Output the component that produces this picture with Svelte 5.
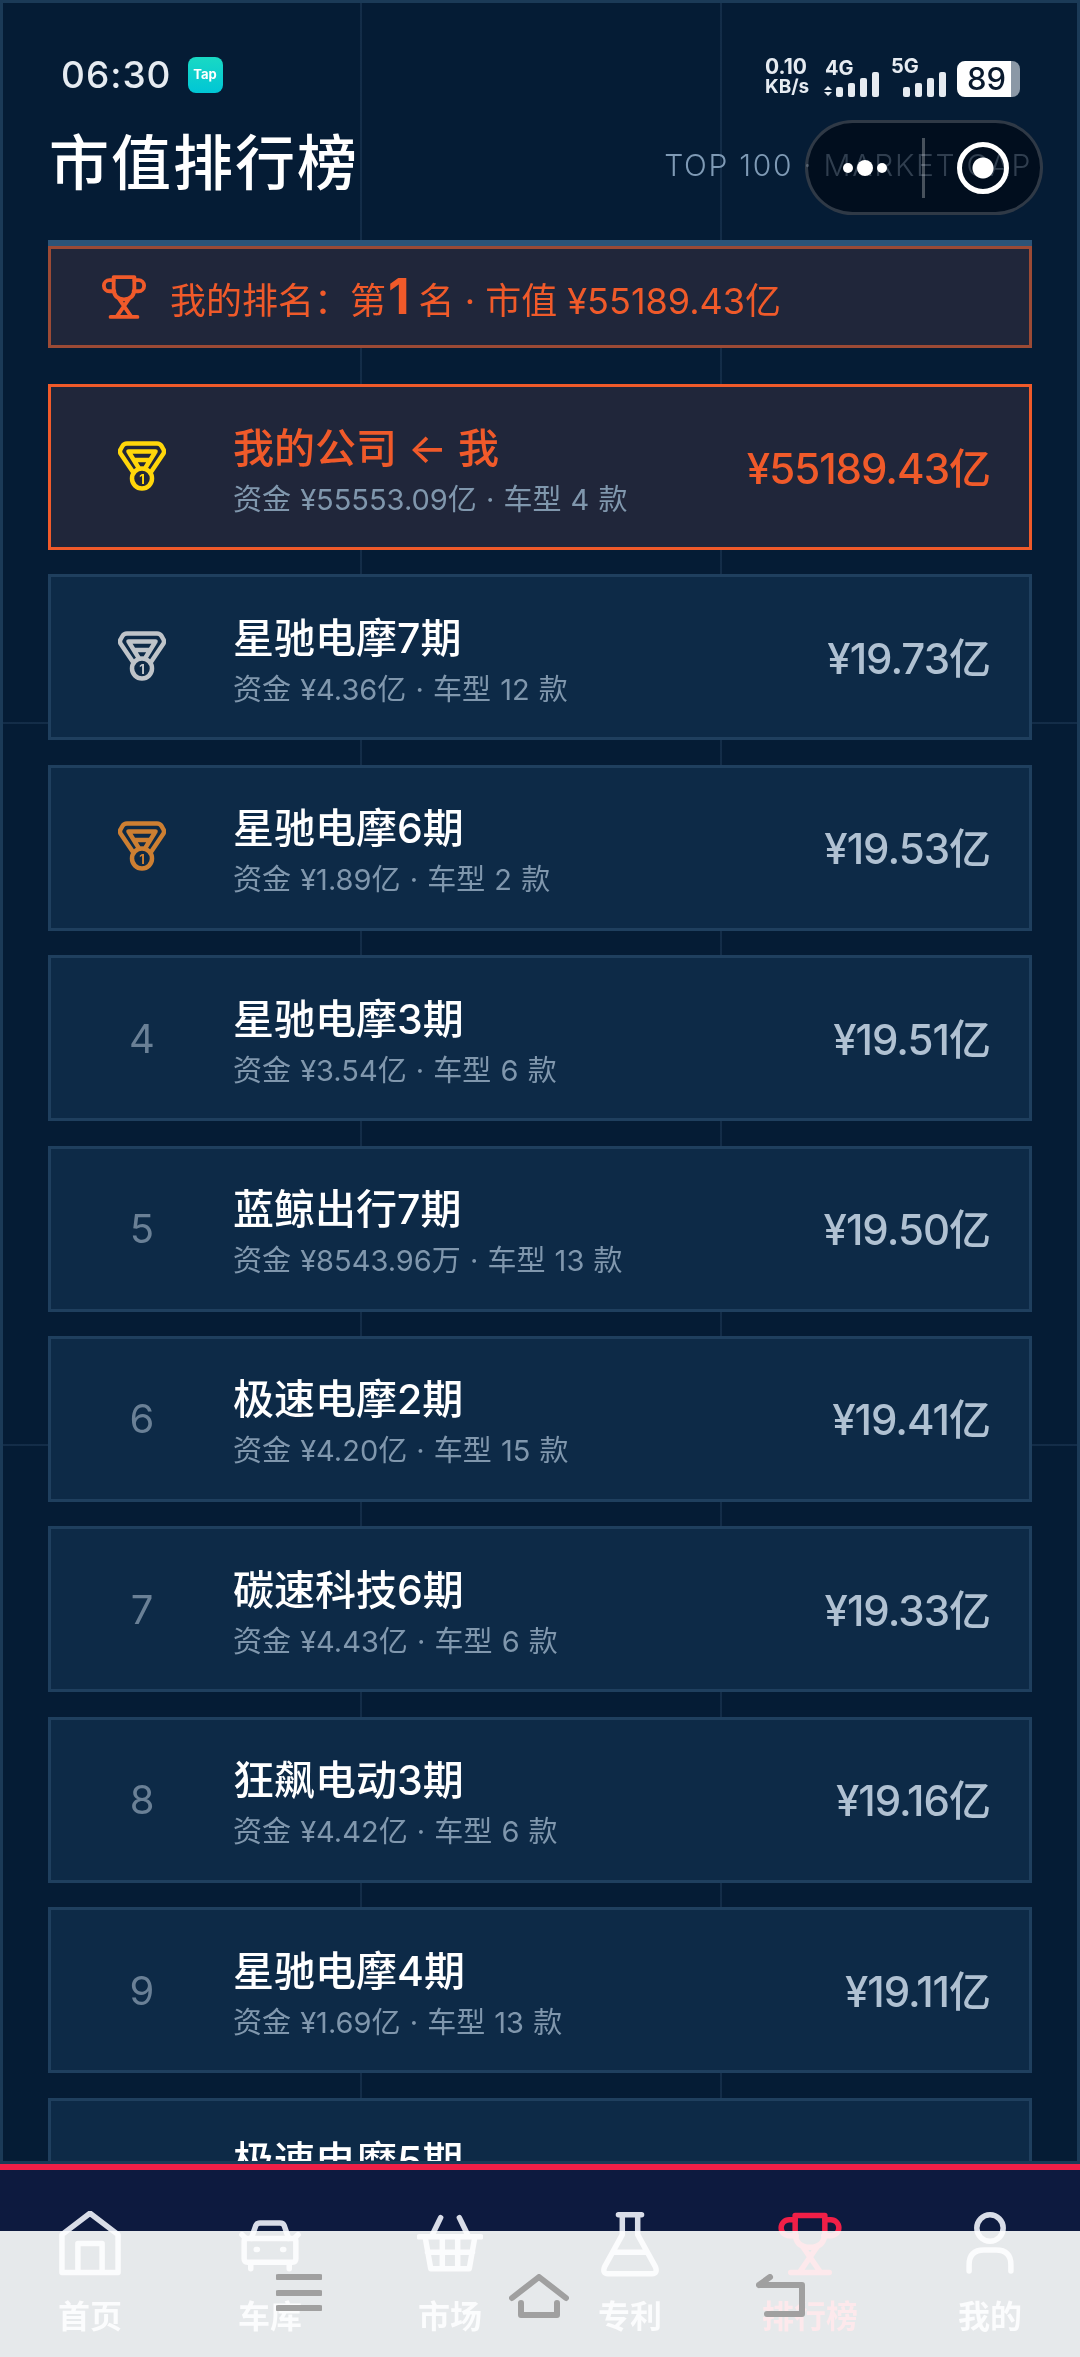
<script>
  const rows = [
    { rank: 1, name: '我的公司 ← 我', cash: '¥55553.09亿', models: 4, value: '¥55189.43亿', me: true },
    { rank: 2, name: '星驰电摩7期', cash: '¥4.36亿', models: 12, value: '¥19.73亿' },
    { rank: 3, name: '星驰电摩6期', cash: '¥1.89亿', models: 2, value: '¥19.53亿' },
    { rank: 4, name: '星驰电摩3期', cash: '¥3.54亿', models: 6, value: '¥19.51亿' },
    { rank: 5, name: '蓝鲸出行7期', cash: '¥8543.96万', models: 13, value: '¥19.50亿' },
    { rank: 6, name: '极速电摩2期', cash: '¥4.20亿', models: 15, value: '¥19.41亿' },
    { rank: 7, name: '碳速科技6期', cash: '¥4.43亿', models: 6, value: '¥19.33亿' },
    { rank: 8, name: '狂飙电动3期', cash: '¥4.42亿', models: 6, value: '¥19.16亿' },
    { rank: 9, name: '星驰电摩4期', cash: '¥1.69亿', models: 13, value: '¥19.11亿' },
    { rank: 10, name: '极速电摩5期', cash: '¥3.02亿', models: 9, value: '¥19.02亿' }
  ];

  const medalColors = { 1: '#ffd60a', 2: '#bfc4c9', 3: '#cd7f32' };

  const tabs = [
    { label: '首页', icon: 'home' },
    { label: '车库', icon: 'car' },
    { label: '市场', icon: 'basket' },
    { label: '专利', icon: 'flask' },
    { label: '排行榜', icon: 'trophy', active: true },
    { label: '我的', icon: 'user' }
  ];
</script>

{#snippet trophy()}
  <path d="M6.6 1.6H17.4V7.6Q17.4 13.2 12 13.2Q6.6 13.2 6.6 7.6Z" />
  <path d="M6.6 3.2H4.4A2.9 2.9 0 0 0 4.4 9H7" />
  <path d="M17.4 3.2H19.6A2.9 2.9 0 0 1 19.6 9H17" />
  <path d="M9.4 13 15.6 22M14.6 13 8.4 22M5 22.4H19" />
{/snippet}

<div class="page">
  <div class="screen">
    <div class="status">
      <div class="status-left">
        <span class="time">06:30</span>
        <span class="tap">Tap</span>
      </div>
      <div class="status-right">
        <div class="speed"><span>0.10</span><span class="unit">KB/s</span></div>
        <div class="net">
          <span class="net-label">4G</span>
          <div class="bars">
            <svg class="updown" viewBox="0 0 10 10" width="10" height="10"><path d="M5 0 9 4H1ZM5 10 1 6H9Z" /></svg>
            <i class="b1"></i><i class="b2"></i><i class="b3"></i><i class="b4"></i>
          </div>
        </div>
        <div class="net five">
          <span class="net-label">5G</span>
          <div class="bars"><i class="b1"></i><i class="b2"></i><i class="b3"></i><i class="b4"></i></div>
        </div>
        <div class="battery"><span>89</span></div>
      </div>
    </div>

    <div class="head">
      <h1>市值排行榜</h1>
      <span class="head-sub">TOP 100 · MARKET CAP</span>
    </div>

    <div class="banner">
      <svg class="banner-icon" viewBox="0 0 24 24" width="46" height="46">{@render trophy()}</svg>
      <span>我的排名：第<b>1</b>名 · 市值 ¥55189.43亿</span>
    </div>

    <div class="list">
      {#each rows as row}
        <div class="row" class:me={row.me}>
          <div class="rank">
            {#if medalColors[row.rank]}
              <svg viewBox="0 0 48 50" width="48" height="50" style="color: {medalColors[row.rank]}">
                <path d="M9 2.5H39Q42 2.5 43.5 5L45.5 8.5Q46.5 10.5 45.5 12.5L33 31M15 31 2.5 12.5Q1.5 10.5 2.5 8.5L4.5 5Q6 2.5 9 2.5" />
                <path d="M10.5 10.5H37.5M10.5 10.5 21 27.5M37.5 10.5 27 27.5M17 19H31" />
                <circle cx="24" cy="37.5" r="10" />
                <text x="24" y="42.5" text-anchor="middle">1</text>
              </svg>
            {:else}
              {row.rank}
            {/if}
          </div>
          <div class="info">
            <div class="name">{row.name}</div>
            <div class="sub">资金 {row.cash} · 车型 {row.models} 款</div>
          </div>
          <div class="value">{row.value}</div>
        </div>
      {/each}
    </div>
  </div>

  <nav class="tabs">
    {#each tabs as tab}
      <div class="tab" class:active={tab.active}>
        <svg viewBox="0 0 24 24" width="66" height="66">
          {#if tab.icon === 'home'}
            <path d="M1.8 8.6 12 .8 22.2 8.6V22.4H1.8ZM7.6 22.4V11.8H16.4V22.4" />
          {:else if tab.icon === 'car'}
            <path d="M5.2 10 6.8 5.4Q7.2 4.4 8.4 4.4H15.6Q16.8 4.4 17.2 5.4L18.8 10" />
            <path d="M3.2 10H20.8Q21.4 10 21.4 11V17.4Q21.4 18.6 20.2 18.6H3.8Q2.6 18.6 2.6 17.4V11Q2.6 10 3.2 10Z" />
            <path d="M5 19V21M19 19V21M1.8 8.6 3.2 10M22.2 8.6 20.8 10" />
            <path d="M7 14H7.4M16.6 14H17" />
          {:else if tab.icon === 'basket'}
            <path d="M.8 9.4H23.2M8.6 2.4 5.4 9M15.4 2.4 18.6 9" />
            <path d="M3 9.6 5 21H19L21 9.6M3.8 15H20.2M9.2 9.6V21M14.8 9.6V21" />
          {:else if tab.icon === 'flask'}
            <path d="M7.8 1.4H16.2M9.2 1.4V8.6L2.8 20.2Q1.8 22.8 4 22.8H20Q22.2 22.8 21.2 20.2L14.8 8.6V1.4M6 15H18" />
          {:else if tab.icon === 'trophy'}
            {@render trophy()}
          {:else}
            <circle cx="12" cy="6.2" r="4.8" />
            <path d="M4.4 21.8V19.6Q4.4 14.2 9.8 14.2H14.2Q19.6 14.2 19.6 19.6V21.8" />
          {/if}
        </svg>
        <span>{tab.label}</span>
      </div>
    {/each}
  </nav>

  <div class="sheet"></div>

  <div class="capsule">
    <div class="more"><i class="small"></i><i class="big"></i><i class="small"></i></div>
    <div class="divider"></div>
    <div class="close"><i></i></div>
  </div>

  <div class="gestures">
    <svg viewBox="0 0 46 40" width="46" height="40"><path d="M2 3H44M2 19H44M2 34H44" /></svg>
    <svg viewBox="0 0 60 46" width="60" height="46"><path d="M3 24 30 3 57 24M12 29V41H48V29" /></svg>
    <svg viewBox="0 0 50 44" width="50" height="44"><path d="M3 11H46V40H11M3 11 14 3" /></svg>
  </div>
</div>

<style>
  :global(body) {
    margin: 0;
    background: #051c35;
  }

  .page {
    position: relative;
    width: 1080px;
    height: 2357px;
    display: flex;
    flex-direction: column;
    overflow: hidden;
    font-family: Inter, "Noto Sans CJK SC", sans-serif;
  }

  .screen {
    flex: 1;
    min-height: 0;
    overflow: hidden;
    box-sizing: border-box;
    border: 3px solid #1b3a57;
    padding: 0 45px;
    background-color: #051c35;
    background-image:
      linear-gradient(to right, rgba(120, 160, 200, 0.13) 2px, transparent 2px),
      linear-gradient(to bottom, rgba(120, 160, 200, 0.13) 2px, transparent 2px);
    background-size: 360px 722px;
    background-position: -3px -3px;
  }

  .status {
    height: 100px;
    margin: 0 12px 0 13px;
    display: flex;
    align-items: flex-end;
    justify-content: space-between;
    padding-bottom: 6px;
    box-sizing: border-box;
    color: #e6ebf1;
  }

  .status-left {
    display: flex;
    align-items: center;
    gap: 16px;
  }

  .time {
    font-size: 37px;
    font-weight: 500;
    letter-spacing: 1px;
  }

  .tap {
    width: 35px;
    height: 36px;
    border-radius: 8px;
    background: linear-gradient(#19d9c4, #00c6d6);
    color: #fff;
    font-size: 13px;
    font-weight: 700;
    line-height: 34px;
    text-align: center;
  }

  .status-right {
    display: flex;
    align-items: flex-end;
  }

  .speed {
    display: flex;
    flex-direction: column;
    font-size: 21px;
    font-weight: 700;
    line-height: 20px;
    width: 60px;
  }

  .speed .unit {
    font-size: 19px;
  }

  .net {
    width: 54px;
    position: relative;
    height: 38px;
    margin-right: 12px;
  }

  .five {
    width: 55px;
    margin-right: 11px;
  }

  .net-label {
    position: absolute;
    left: 0;
    top: -3px;
    font-size: 20px;
    font-weight: 700;
  }

  .five .net-label {
    top: -5px;
  }

  .bars {
    position: absolute;
    right: 0;
    bottom: 0;
    display: flex;
    align-items: flex-end;
    gap: 5px;
  }

  .bars i {
    width: 7px;
    border-radius: 2px;
    background: #e6ebf1;
  }

  .b1 { height: 10px; }
  .b2 { height: 14px; }
  .b3 { height: 19px; }
  .b4 { height: 25px; }

  .updown {
    fill: #e6ebf1;
    margin-bottom: 1px;
    margin-right: -2px;
  }

  .battery {
    width: 63px;
    height: 36px;
    box-sizing: border-box;
    border-radius: 8px;
    background: linear-gradient(to right, #fff 54px, #8b98a6 54px);
    color: #0a1a2e;
    font-size: 31px;
    font-weight: 500;
    line-height: 36px;
    padding-left: 10px;
  }

  .head {
    height: 137px;
    display: flex;
    align-items: flex-start;
    justify-content: space-between;
  }

  h1 {
    margin: 18px 0 0 1px;
    color: #fff;
    font-size: 60px;
    font-weight: 500;
    line-height: 84px;
    letter-spacing: 2px;
  }

  .head-sub {
    margin-top: 40px;
    color: #7f9ab5;
    font-size: 30px;
    font-weight: 300;
    line-height: 44px;
    letter-spacing: 1.7px;
    white-space: nowrap;
  }

  .banner {
    height: 102px;
    box-sizing: border-box;
    display: flex;
    align-items: center;
    gap: 23px;
    border: 3px solid #9c4a35;
    box-shadow: 0 -6px 0 #2c5478;
    background: #20263a;
    margin: 6px 0 36px;
    padding-left: 50px;
    color: #f05a2a;
    font-size: 36px;
  }

  .banner b {
    font-size: 50px;
    font-weight: 700;
    line-height: 1;
    margin: 0 9px 0 2px;
  }

  .banner span {
    white-space: nowrap;
  }

  .banner-icon,
  .tab svg {
    fill: none;
    stroke: currentColor;
    stroke-width: 2;
    stroke-linecap: round;
    stroke-linejoin: round;
  }

  .list {
    display: flex;
    flex-direction: column;
    gap: 24.4px;
  }

  .row {
    flex: none;
    height: 166px;
    box-sizing: border-box;
    display: flex;
    align-items: center;
    border: 3px solid #1f3f5e;
    background: #0d2a47;
    padding-right: 39px;
  }

  .row.me {
    border-color: #f05a2a;
    background: #20263a;
  }

  .rank {
    width: 182px;
    text-align: center;
    color: #6a8096;
    font-size: 40px;
  }

  .rank svg {
    display: block;
    margin: -3px auto 0;
    fill: none;
    stroke: currentColor;
    stroke-width: 4.5;
    stroke-linejoin: round;
    stroke-linecap: round;
  }

  .rank text {
    fill: currentColor;
    stroke: none;
    font-size: 13px;
    font-weight: 700;
  }

  .info {
    flex: 1;
    padding-top: 2px;
  }

  .name {
    color: #fff;
    font-size: 41px;
    font-weight: 500;
    line-height: 63px;
  }

  .me .name,
  .me .value {
    color: #f05a2a;
  }

  .sub {
    color: #8097ad;
    font-size: 29px;
    line-height: 40px;
    word-spacing: 1px;
  }

  .value {
    color: #b0c1d2;
    font-size: 42px;
    font-weight: 500;
    letter-spacing: -1px;
    padding-bottom: 4px;
  }

  .tabs {
    flex: none;
    height: 193px;
    box-sizing: border-box;
    border-top: 6px solid #f01f47;
    background: #0d1a3f;
    display: grid;
    grid-template-columns: repeat(6, 180px);
    padding-top: 41px;
  }

  .tab {
    display: flex;
    flex-direction: column;
    align-items: center;
    color: #d9dde8;
  }

  .tab.active {
    color: #f01f47;
  }

  .tab span {
    margin-top: 17px;
    font-size: 32px;
    font-weight: 700;
    line-height: 46px;
  }

  .sheet {
    position: absolute;
    left: 0;
    right: 0;
    top: 2231px;
    bottom: 0;
    background: #e5e6e4;
    mix-blend-mode: screen;
  }

  .capsule {
    position: absolute;
    left: 805px;
    top: 120px;
    width: 238px;
    height: 95px;
    box-sizing: border-box;
    border: 3px solid rgba(255, 255, 255, 0.18);
    border-radius: 48px;
    background: rgba(0, 6, 16, 0.62);
    display: flex;
    align-items: center;
  }

  .more {
    width: 114px;
    display: flex;
    align-items: center;
    justify-content: center;
    gap: 4px;
  }

  .more i {
    border-radius: 50%;
    background: #fff;
  }

  .small { width: 10px; height: 10px; }
  .big { width: 16px; height: 16px; }

  .divider {
    width: 3px;
    height: 60px;
    background: rgba(255, 255, 255, 0.28);
  }

  .close {
    flex: 1;
    display: flex;
    justify-content: center;
  }

  .close i {
    width: 52px;
    height: 52px;
    box-sizing: border-box;
    border: 5px solid #fff;
    border-radius: 50%;
    background: radial-gradient(circle, #fff 10px, transparent 11px);
  }

  .gestures {
    position: absolute;
    left: 276px;
    top: 2274px;
    width: 530px;
    display: flex;
    justify-content: space-between;
    align-items: flex-start;
  }

  .gestures svg {
    fill: none;
    stroke: #a0a0a0;
    stroke-width: 6;
    stroke-linecap: round;
    stroke-linejoin: round;
  }
</style>
